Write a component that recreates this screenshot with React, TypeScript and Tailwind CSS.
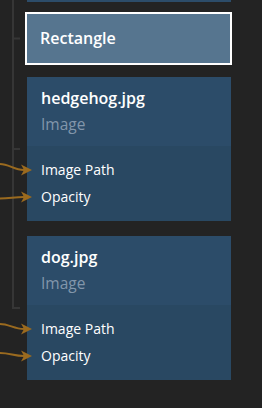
import React from "react";

function NodeCard({ title }: { title: string }) {
  return (
    <div className="w-[204px] flex flex-col">
      <div className="bg-[#2c4c69] h-[69px] px-[14px] pt-[10px] flex flex-col">
        <div className="text-[16px] leading-[23px] font-semibold text-white">{title}</div>
        <div className="text-[15.5px] leading-[28px] text-[#8296ab]">Image</div>
      </div>
      <div className="bg-[#294862] h-[75px] px-[14px] pt-[10px] flex flex-col">
        <div className="text-[14px] leading-[27px] text-white">Image Path</div>
        <div className="text-[14px] leading-[27px] text-white">Opacity</div>
      </div>
    </div>
  );
}

export default function App() {
  return (
    <div
      className="relative w-[262px] h-[408px] bg-[#232323] overflow-hidden"
      style={{ fontFamily: '"Open Sans", "Noto Sans", sans-serif' }}
    >
      {/* tree connector lines */}
      <svg className="absolute left-0 top-0 pointer-events-none" width="262" height="408">
        <path d="M13 0 V308 H20" stroke="#363636" strokeWidth="2" fill="none" />
        <path d="M13 38.5 H20" stroke="#363636" strokeWidth="2" fill="none" />
        <path d="M13 149 H20" stroke="#363636" strokeWidth="2" fill="none" />
      </svg>

      <div className="relative flex flex-col ml-[27px]">
        <div className="w-[204px] h-[2px] bg-[#2c4c69]" />
        <div className="mt-[10px] -ml-[2px] w-[207px] h-[53px] border-2 border-white bg-[#56758f] flex items-center px-[13px]">
          <span className="text-[16px] font-semibold text-white leading-none -mt-[1px]">Rectangle</span>
        </div>
        <div className="mt-[12px]">
          <NodeCard title="hedgehog.jpg" />
        </div>
        <div className="mt-[15px]">
          <NodeCard title="dog.jpg" />
        </div>
      </div>

      {/* arrows */}
      <svg className="absolute left-0 top-0 pointer-events-none" width="262" height="408">
        <g stroke="#9a6a1f" strokeWidth="2" fill="none">
          <path d="M0 164 C9 164 14 170 24 170" />
          <path d="M0 198.5 C10 198.5 14 197 24 197" />
          <path d="M0 324 C9 324 14 329 24 329" />
          <path d="M0 353 C10 353 14 356 24 356" />
        </g>
        <g fill="#9a6a1f">
          <path d="M21 164.5 L32 170 L21 175.5 L24 170 Z" />
          <path d="M21 191.5 L32 197 L21 202.5 L24 197 Z" />
          <path d="M21 323.5 L32 329 L21 334.5 L24 329 Z" />
          <path d="M21 350.5 L32 356 L21 361.5 L24 356 Z" />
        </g>
      </svg>
    </div>
  );
}
